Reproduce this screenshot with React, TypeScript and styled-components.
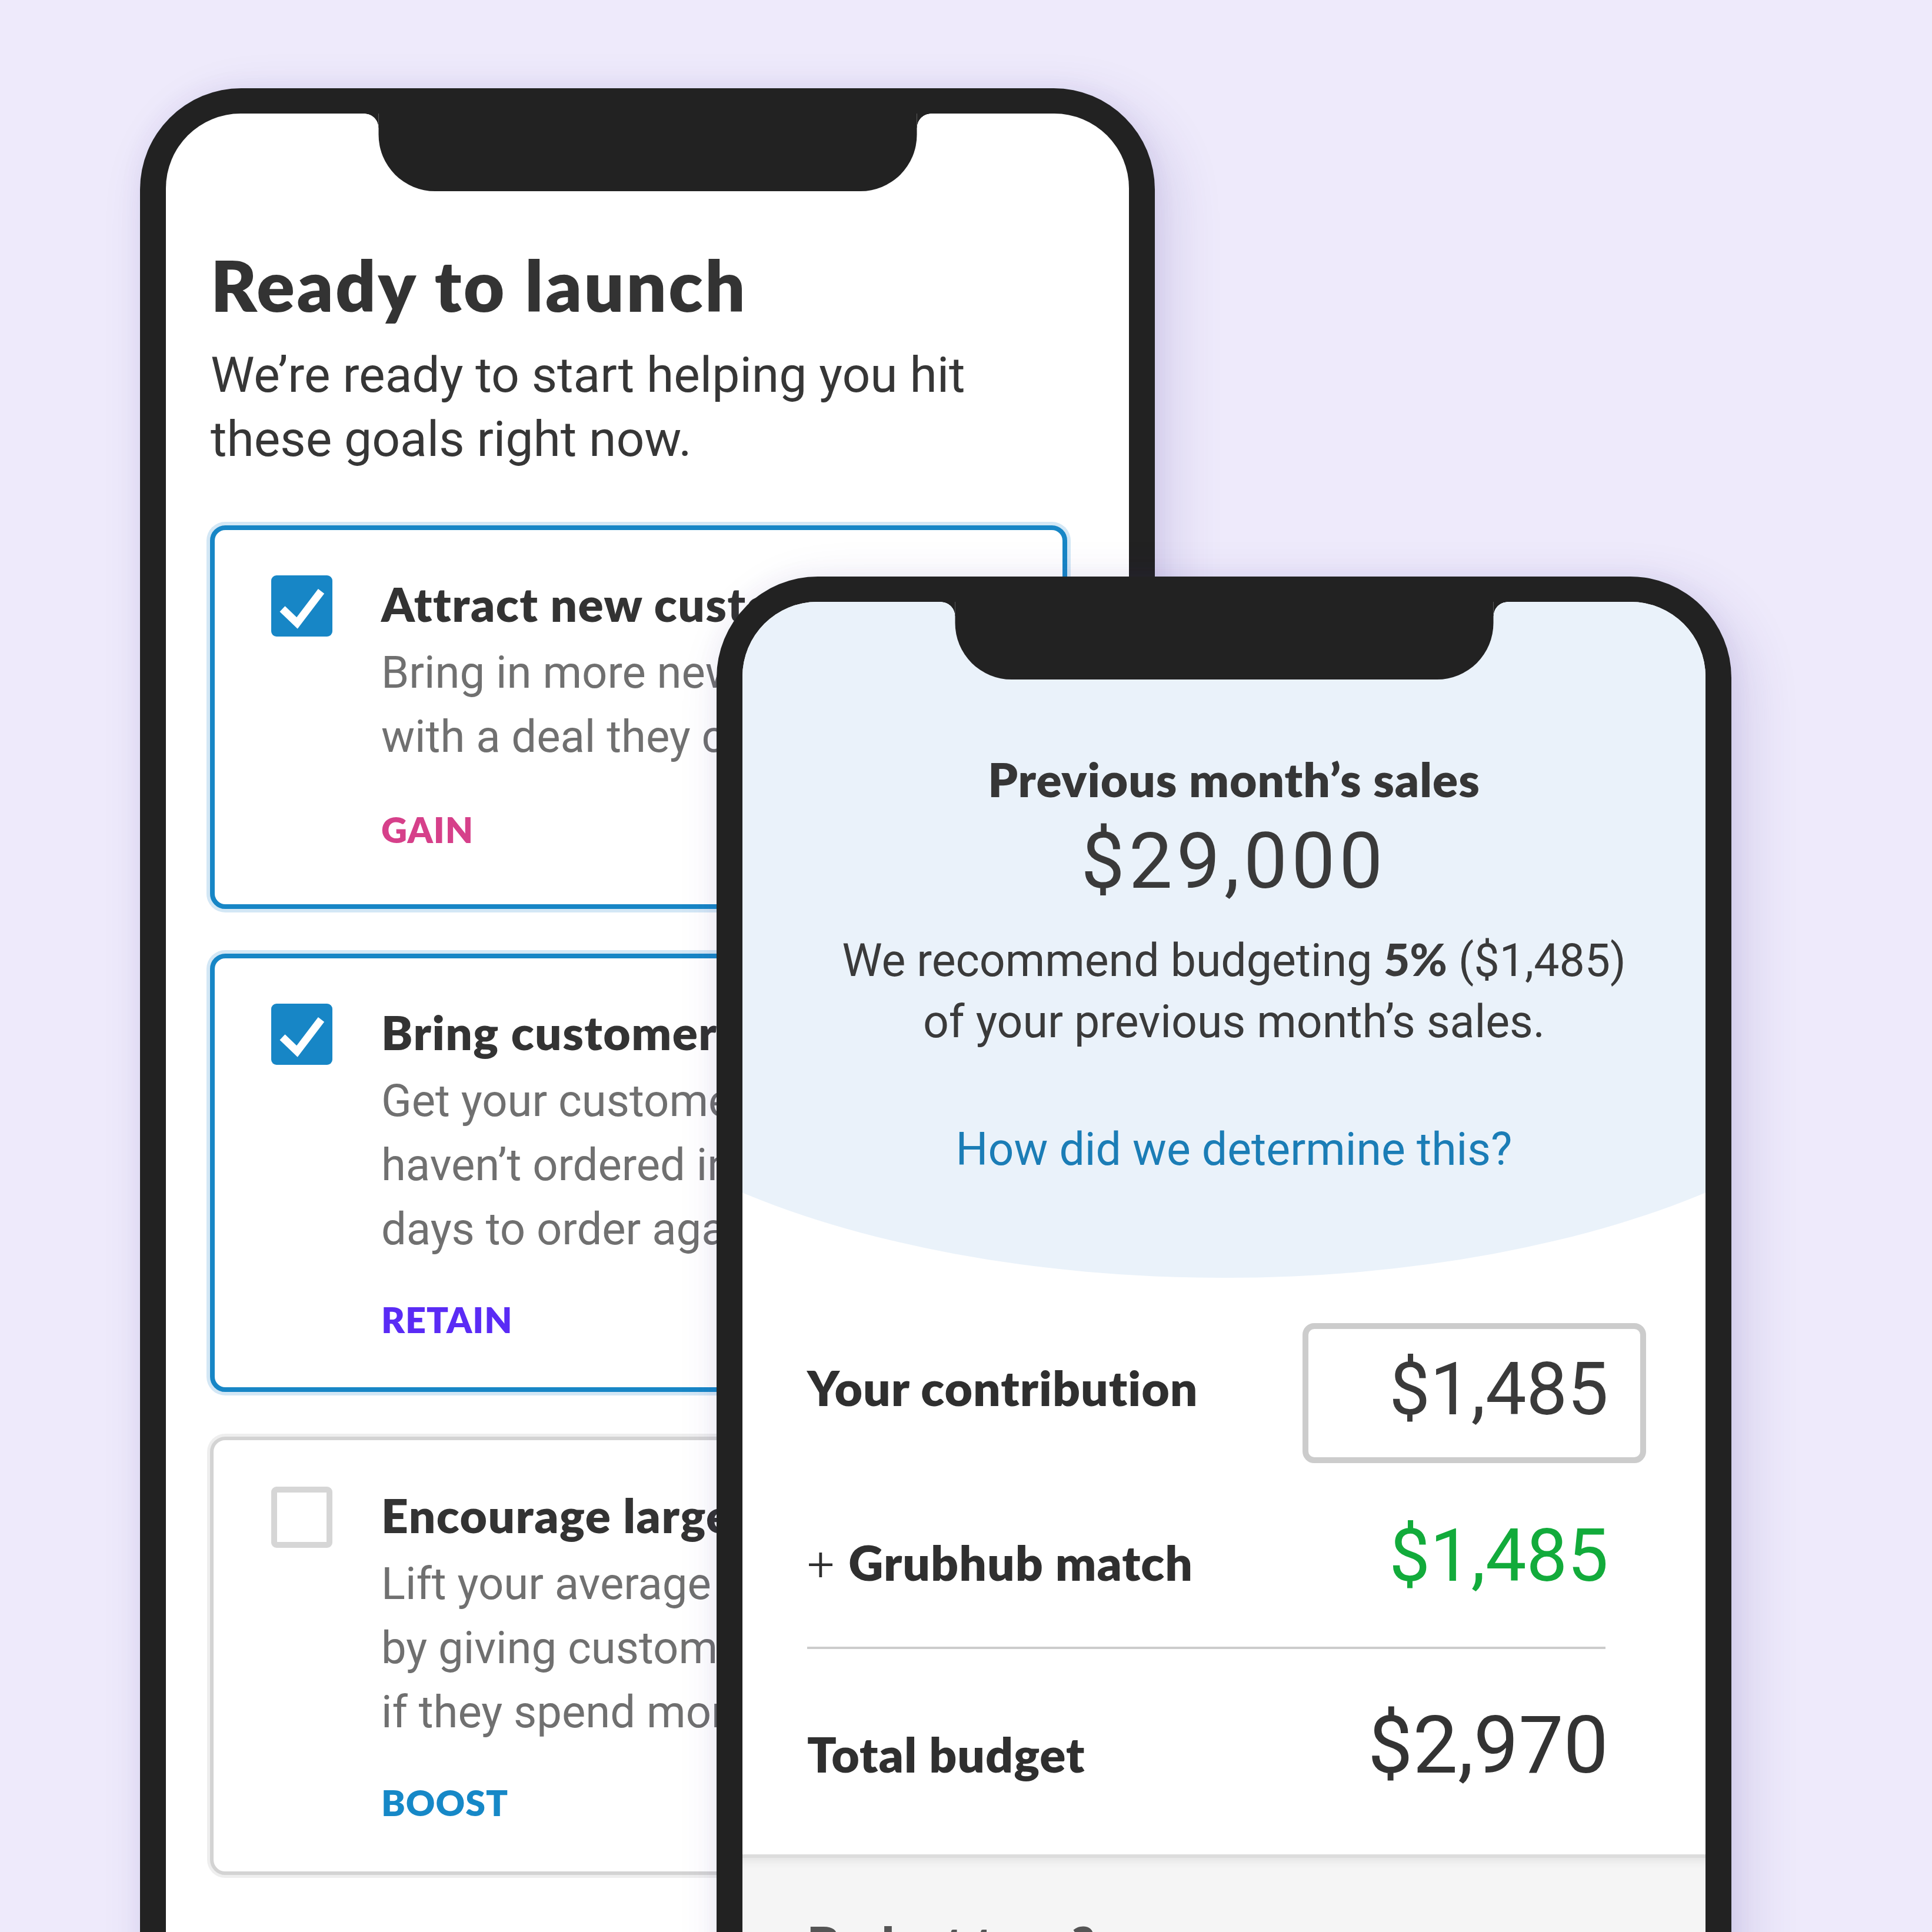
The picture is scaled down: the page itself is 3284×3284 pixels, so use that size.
import React from 'react';
import styled, { createGlobalStyle } from 'styled-components';

const GlobalStyle = createGlobalStyle`
  html, body { margin: 0; padding: 0; background: #eeeafb; }
  body { font-family: Roboto, "Liberation Sans", sans-serif; }
  * { box-sizing: border-box; }
`;

const Stage = styled.main`
  width: 3284px;
  height: 3284px;
  overflow: hidden;
  background: #eeeafb;
  display: grid;
  grid-template-columns: 3284px;
  grid-template-rows: 3284px;
  align-items: start;
  justify-items: start;
`;

const Phone = styled.div<{ $x: number; $y: number }>`
  grid-area: 1 / 1;
  margin-left: ${(p) => p.$x}px;
  margin-top: ${(p) => p.$y}px;
  position: relative;
  width: 1725px;
  height: 3400px;
  padding: 43px 44px 0;
  background: #222222;
  border-radius: 172px;
  box-shadow: 26px 26px 90px rgba(70, 50, 150, 0.16), 0 0 40px rgba(70, 50, 150, 0.06);
`;

const Notch = styled.div`
  position: absolute;
  top: 43px;
  left: 50%;
  transform: translateX(-50%);
  width: 915px;
  height: 132px;
  background: #222222;
  border-radius: 0 0 96px 96px;
  z-index: 2;
  &::before,
  &::after {
    content: '';
    position: absolute;
    top: 0;
    width: 24px;
    height: 24px;
  }
  &::before {
    left: -24px;
    background: radial-gradient(circle at 0 100%, transparent 23.5px, #222222 24px);
  }
  &::after {
    right: -24px;
    background: radial-gradient(circle at 100% 100%, transparent 23.5px, #222222 24px);
  }
`;

const Screen = styled.div`
  width: 100%;
  height: 100%;
  border-radius: 127px 127px 0 0;
  overflow: hidden;
  background: #ffffff;
  display: flex;
  flex-direction: column;
`;

/* ---------- Phone 1: Ready to launch ---------- */

const LaunchBody = styled.div`
  padding: 219px 105px 0 75px;
  display: flex;
  flex-direction: column;
`;

const Title = styled.h1`
  margin: 0 0 0 1px;
  font-family: Lato, "Open Sans", sans-serif;
  font-weight: 800;
  font-size: 120px;
  line-height: 144px;
  letter-spacing: 3.5px;
  color: #333333;
  white-space: nowrap;
`;

const Lead = styled.p`
  margin: 27px 0 0 1px;
  font-family: Roboto, "Liberation Sans", sans-serif;
  font-weight: 400;
  font-size: 84px;
  line-height: 109px;
  color: #363636;
  white-space: nowrap;
`;

const CardList = styled.div`
  margin-top: 92px;
  display: flex;
  flex-direction: column;
  gap: 76px;
`;

const Card = styled.div<{ $selected: boolean }>`
  display: grid;
  grid-template-columns: 104px 1fr;
  column-gap: 83px;
  align-items: start;
  background: #ffffff;
  border-radius: 26px;
  border: ${(p) => (p.$selected ? '8px solid #1786c6' : '6px solid #d3d3d3')};
  box-shadow: ${(p) => (p.$selected ? '0 0 0 6px #d3e7f5' : '0 0 0 5px #eeeeee')};
  padding: ${(p) => (p.$selected ? '77px 40px 79px 96px' : '79px 42px 81px 98px')};
  &:first-child {
    padding-bottom: 91px;
  }
`;

const Check = styled.span<{ $checked: boolean }>`
  display: flex;
  align-items: center;
  justify-content: center;
  width: 104px;
  height: 104px;
  border-radius: 9px;
  background: ${(p) => (p.$checked ? '#1786c6' : '#ffffff')};
  border: ${(p) => (p.$checked ? 'none' : '10px solid #d6d6d6')};
`;

const CardText = styled.div`
  display: flex;
  flex-direction: column;
  white-space: nowrap;
`;

const CardTitle = styled.h2`
  margin: 0;
  font-family: Lato, "Open Sans", sans-serif;
  font-weight: 800;
  font-size: 80px;
  line-height: 96px;
  letter-spacing: 1.5px;
  color: #333333;
`;

const CardDesc = styled.p`
  margin: 15px 0 0;
  font-family: Roboto, "Liberation Sans", sans-serif;
  font-weight: 400;
  font-size: 76px;
  line-height: 109px;
  color: #707070;
`;

const Tag = styled.span<{ $color: string; $first: boolean }>`
  margin-top: ${(p) => (p.$first ? 66 : 62)}px;
  font-family: Lato, "Open Sans", sans-serif;
  font-weight: 800;
  font-size: 61px;
  line-height: 73px;
  letter-spacing: 1px;
  color: ${(p) => p.$color};
`;

/* ---------- Phone 2: budget ---------- */

const Hero = styled.section`
  margin: 0 -382px;
  padding: 253px 458px 166px 492px;
  background: #eaf2fa;
  border-radius: 0 0 50% 50% / 0 0 539px 539px;
  display: flex;
  flex-direction: column;
  align-items: center;
  text-align: center;
  white-space: nowrap;
`;

const HeroTitle = styled.h2`
  margin: 0;
  font-family: Lato, "Open Sans", sans-serif;
  font-weight: 800;
  font-size: 80px;
  line-height: 96px;
  letter-spacing: 1px;
  color: #363636;
`;

const BigAmount = styled.div`
  margin-top: 13px;
  font-family: Roboto, "Liberation Sans", sans-serif;
  font-weight: 400;
  font-size: 132px;
  line-height: 158px;
  letter-spacing: 7px;
  color: #3a3a3a;
`;

const Recommend = styled.p`
  margin: 34px 0 0;
  font-family: Roboto, "Liberation Sans", sans-serif;
  font-weight: 400;
  font-size: 77px;
  line-height: 104px;
  color: #3a3a3a;
`;

const Strong = styled.b`
  font-family: Lato, "Open Sans", sans-serif;
  font-weight: 900;
`;

const HowLink = styled.a`
  margin-top: 113px;
  font-family: Roboto, "Liberation Sans", sans-serif;
  font-weight: 400;
  font-size: 77px;
  line-height: 104px;
  color: #1b7db6;
  text-decoration: none;
`;

const Breakdown = styled.section`
  padding: 77px 101px 104px 110px;
  background: #ffffff;
  border-bottom: 6px solid #dcdcdc;
  display: flex;
  flex-direction: column;
`;

const Row = styled.div<{ $gap: number; $align: 'center' | 'baseline' }>`
  margin-top: ${(p) => p.$gap}px;
  display: flex;
  justify-content: space-between;
  align-items: ${(p) => p.$align};
  white-space: nowrap;
`;

const LabelGroup = styled.div`
  display: flex;
  align-items: baseline;
  gap: 24px;
`;

const Label = styled.span<{ $lift?: number }>`
  padding-bottom: ${(p) => p.$lift ?? 0}px;
  font-family: Lato, "Open Sans", sans-serif;
  font-weight: 800;
  font-size: 82px;
  line-height: 98px;
  letter-spacing: 1px;
  color: #2f2f2f;
`;

const Plus = styled.span`
  font-family: Roboto, "Liberation Sans", sans-serif;
  font-weight: 300;
  font-size: 82px;
  line-height: 98px;
  color: #2f2f2f;
`;

const AmountBox = styled.div`
  width: 584px;
  height: 238px;
  border: 10px solid #cccccc;
  border-radius: 20px;
  padding: 0 54px 14px 0;
  display: flex;
  align-items: center;
  justify-content: flex-end;
  font-family: Roboto, "Liberation Sans", sans-serif;
  font-size: 124px;
  line-height: 149px;
  color: #3a3a3a;
`;

const Amount = styled.span<{ $size: number; $color: string }>`
  padding-right: 64px;
  font-family: Roboto, "Liberation Sans", sans-serif;
  font-weight: 400;
  font-size: ${(p) => p.$size}px;
  line-height: 1.2;
  color: ${(p) => p.$color};
`;

const Divider = styled.hr`
  margin: 79px 69px 0 0;
  height: 4px;
  border: none;
  background: #cccccc;
`;

const NextSection = styled.section`
  flex: 1;
  background: #f5f5f5;
  box-shadow: inset 0 14px 18px -12px rgba(0, 0, 0, 0.1);
  padding: 96px 110px 0;
`;

const NextTitle = styled.h3`
  margin: 0;
  font-family: Lato, "Open Sans", sans-serif;
  font-weight: 800;
  font-size: 82px;
  line-height: 98px;
  color: #555555;
`;

const CheckMark = () => (
  <svg width="104" height="104" viewBox="0 0 104 104" aria-hidden="true">
    <path d="M19 57 L44 81 L85 27" fill="none" stroke="#ffffff" strokeWidth="13" strokeLinejoin="miter" strokeLinecap="butt" />
  </svg>
);

type Goal = { title: string; lines: string[]; tag: string; color: string; checked: boolean };

const goals: Goal[] = [
  {
    title: 'Attract new customers',
    lines: ['Bring in more new customers', 'with a deal they can’t resist.'],
    tag: 'GAIN',
    color: '#d6408a',
    checked: true,
  },
  {
    title: 'Bring customers back',
    lines: ['Get your customers who', 'haven’t ordered in 30', 'days to order again.'],
    tag: 'RETAIN',
    color: '#5a2bf5',
    checked: true,
  },
  {
    title: 'Encourage larger orders',
    lines: ['Lift your average order size', 'by giving customers a deal', 'if they spend more.'],
    tag: 'BOOST',
    color: '#1688c7',
    checked: false,
  },
];

export default function App() {
  return (
    <Stage>
      <GlobalStyle />
      <Phone $x={238} $y={150}>
        <Notch />
        <Screen>
          <LaunchBody>
            <Title>Ready to launch</Title>
            <Lead>
              We’re ready to start helping you hit
              <br />
              these goals right now.
            </Lead>
            <CardList>
              {goals.map((g, idx) => (
                <Card key={g.tag} $selected={g.checked}>
                  <Check $checked={g.checked}>{g.checked && <CheckMark />}</Check>
                  <CardText>
                    <CardTitle>{g.title}</CardTitle>
                    <CardDesc>
                      {g.lines.map((l, i) => (
                        <React.Fragment key={i}>
                          {i > 0 && <br />}
                          {l}
                        </React.Fragment>
                      ))}
                    </CardDesc>
                    <Tag $color={g.color} $first={idx === 0}>
                      {g.tag}
                    </Tag>
                  </CardText>
                </Card>
              ))}
            </CardList>
          </LaunchBody>
        </Screen>
      </Phone>

      <Phone $x={1218} $y={980}>
        <Notch />
        <Screen>
          <Hero>
            <HeroTitle>Previous month’s sales</HeroTitle>
            <BigAmount>$29,000</BigAmount>
            <Recommend>
              We recommend budgeting <Strong>5%</Strong> ($1,485)
              <br />
              of your previous month’s sales.
            </Recommend>
            <HowLink href="#">How did we determine this?</HowLink>
          </Hero>
          <Breakdown>
            <Row $gap={0} $align="center">
              <Label $lift={20}>Your contribution</Label>
              <AmountBox>$1,485</AmountBox>
            </Row>
            <Row $gap={84} $align="baseline">
              <LabelGroup>
                <Plus>+</Plus>
                <Label>Grubhub match</Label>
              </LabelGroup>
              <Amount $size={124} $color="#12ab3b">$1,485</Amount>
            </Row>
            <Divider />
            <Row $gap={82} $align="baseline">
              <Label>Total budget</Label>
              <Amount $size={136} $color="#333333">$2,970</Amount>
            </Row>
          </Breakdown>
          <NextSection>
            <NextTitle>Budget type?</NextTitle>
          </NextSection>
        </Screen>
      </Phone>
    </Stage>
  );
}
